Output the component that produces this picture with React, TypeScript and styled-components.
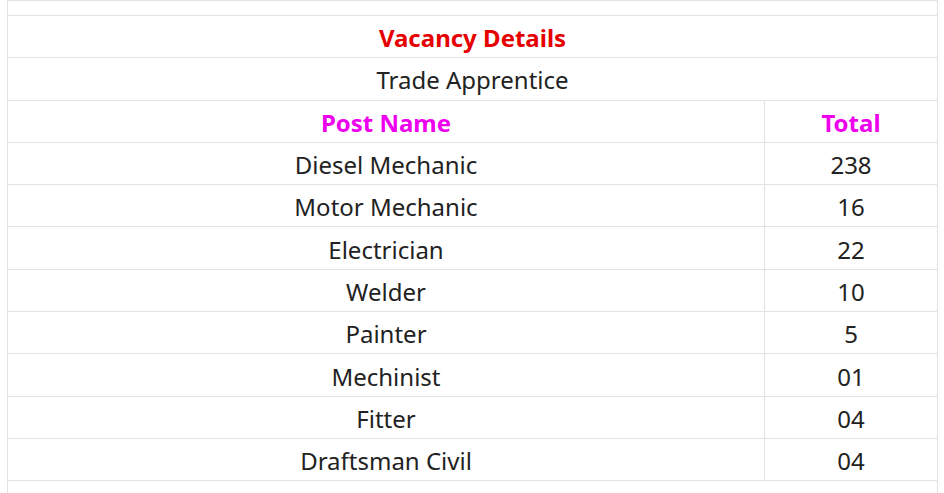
import styled, { createGlobalStyle } from "styled-components";

const GlobalStyle = createGlobalStyle`
  html, body {
    margin: 0;
    padding: 0;
    background: #fff;
  }
  body {
    font-family: "Noto Sans", "Open Sans", Arial, sans-serif;
    color: #222;
    overflow: hidden;
  }
`;

const Page = styled.div`
  padding: 0 6px 0 7px;
  height: 493px;
  overflow: hidden;
`;

const Table = styled.table`
  width: 100%;
  border-collapse: collapse;
  border: 1px solid #e2e2e2;
`;

const Cell = styled.td<{ $width?: number; $tone?: "title" | "head" | "plain" }>`
  border: 1px solid #e2e2e2;
  height: 38.3px;
  padding: 3px 0 0;
  text-align: center;
  vertical-align: middle;
  font-size: 24px;
  line-height: 1;
  ${(p) => (p.$width ? `width: ${p.$width}px;` : "")}
  ${(p) =>
    p.$tone === "title"
      ? "color: #e60000; font-weight: 700;"
      : p.$tone === "head"
      ? "color: #ee00ee; font-weight: 700;"
      : "color: #222; font-weight: 400;"}
`;

const Spacer = styled.td<{ $h: number }>`
  border: 1px solid #e2e2e2;
  height: ${(p) => p.$h}px;
  padding: 0;
`;

const vacancies: [string, string][] = [
  ["Diesel Mechanic", "238"],
  ["Motor Mechanic", "16"],
  ["Electrician", "22"],
  ["Welder", "10"],
  ["Painter", "5"],
  ["Mechinist", "01"],
  ["Fitter", "04"],
  ["Draftsman Civil", "04"],
];

export default function App() {
  return (
    <>
      <GlobalStyle />
      <Page>
        <Table>
          <tbody>
            <tr>
              <Spacer colSpan={2} $h={14} />
            </tr>
            <tr>
              <Cell colSpan={2} $tone="title">
                Vacancy Details
              </Cell>
            </tr>
            <tr>
              <Cell colSpan={2}>Trade Apprentice</Cell>
            </tr>
            <tr>
              <Cell $tone="head">Post Name</Cell>
              <Cell $tone="head" $width={172}>
                Total
              </Cell>
            </tr>
            {vacancies.map(([post, total]) => (
              <tr key={post}>
                <Cell>{post}</Cell>
                <Cell>{total}</Cell>
              </tr>
            ))}
            <tr>
              <Spacer colSpan={2} $h={40} />
            </tr>
          </tbody>
        </Table>
      </Page>
    </>
  );
}
